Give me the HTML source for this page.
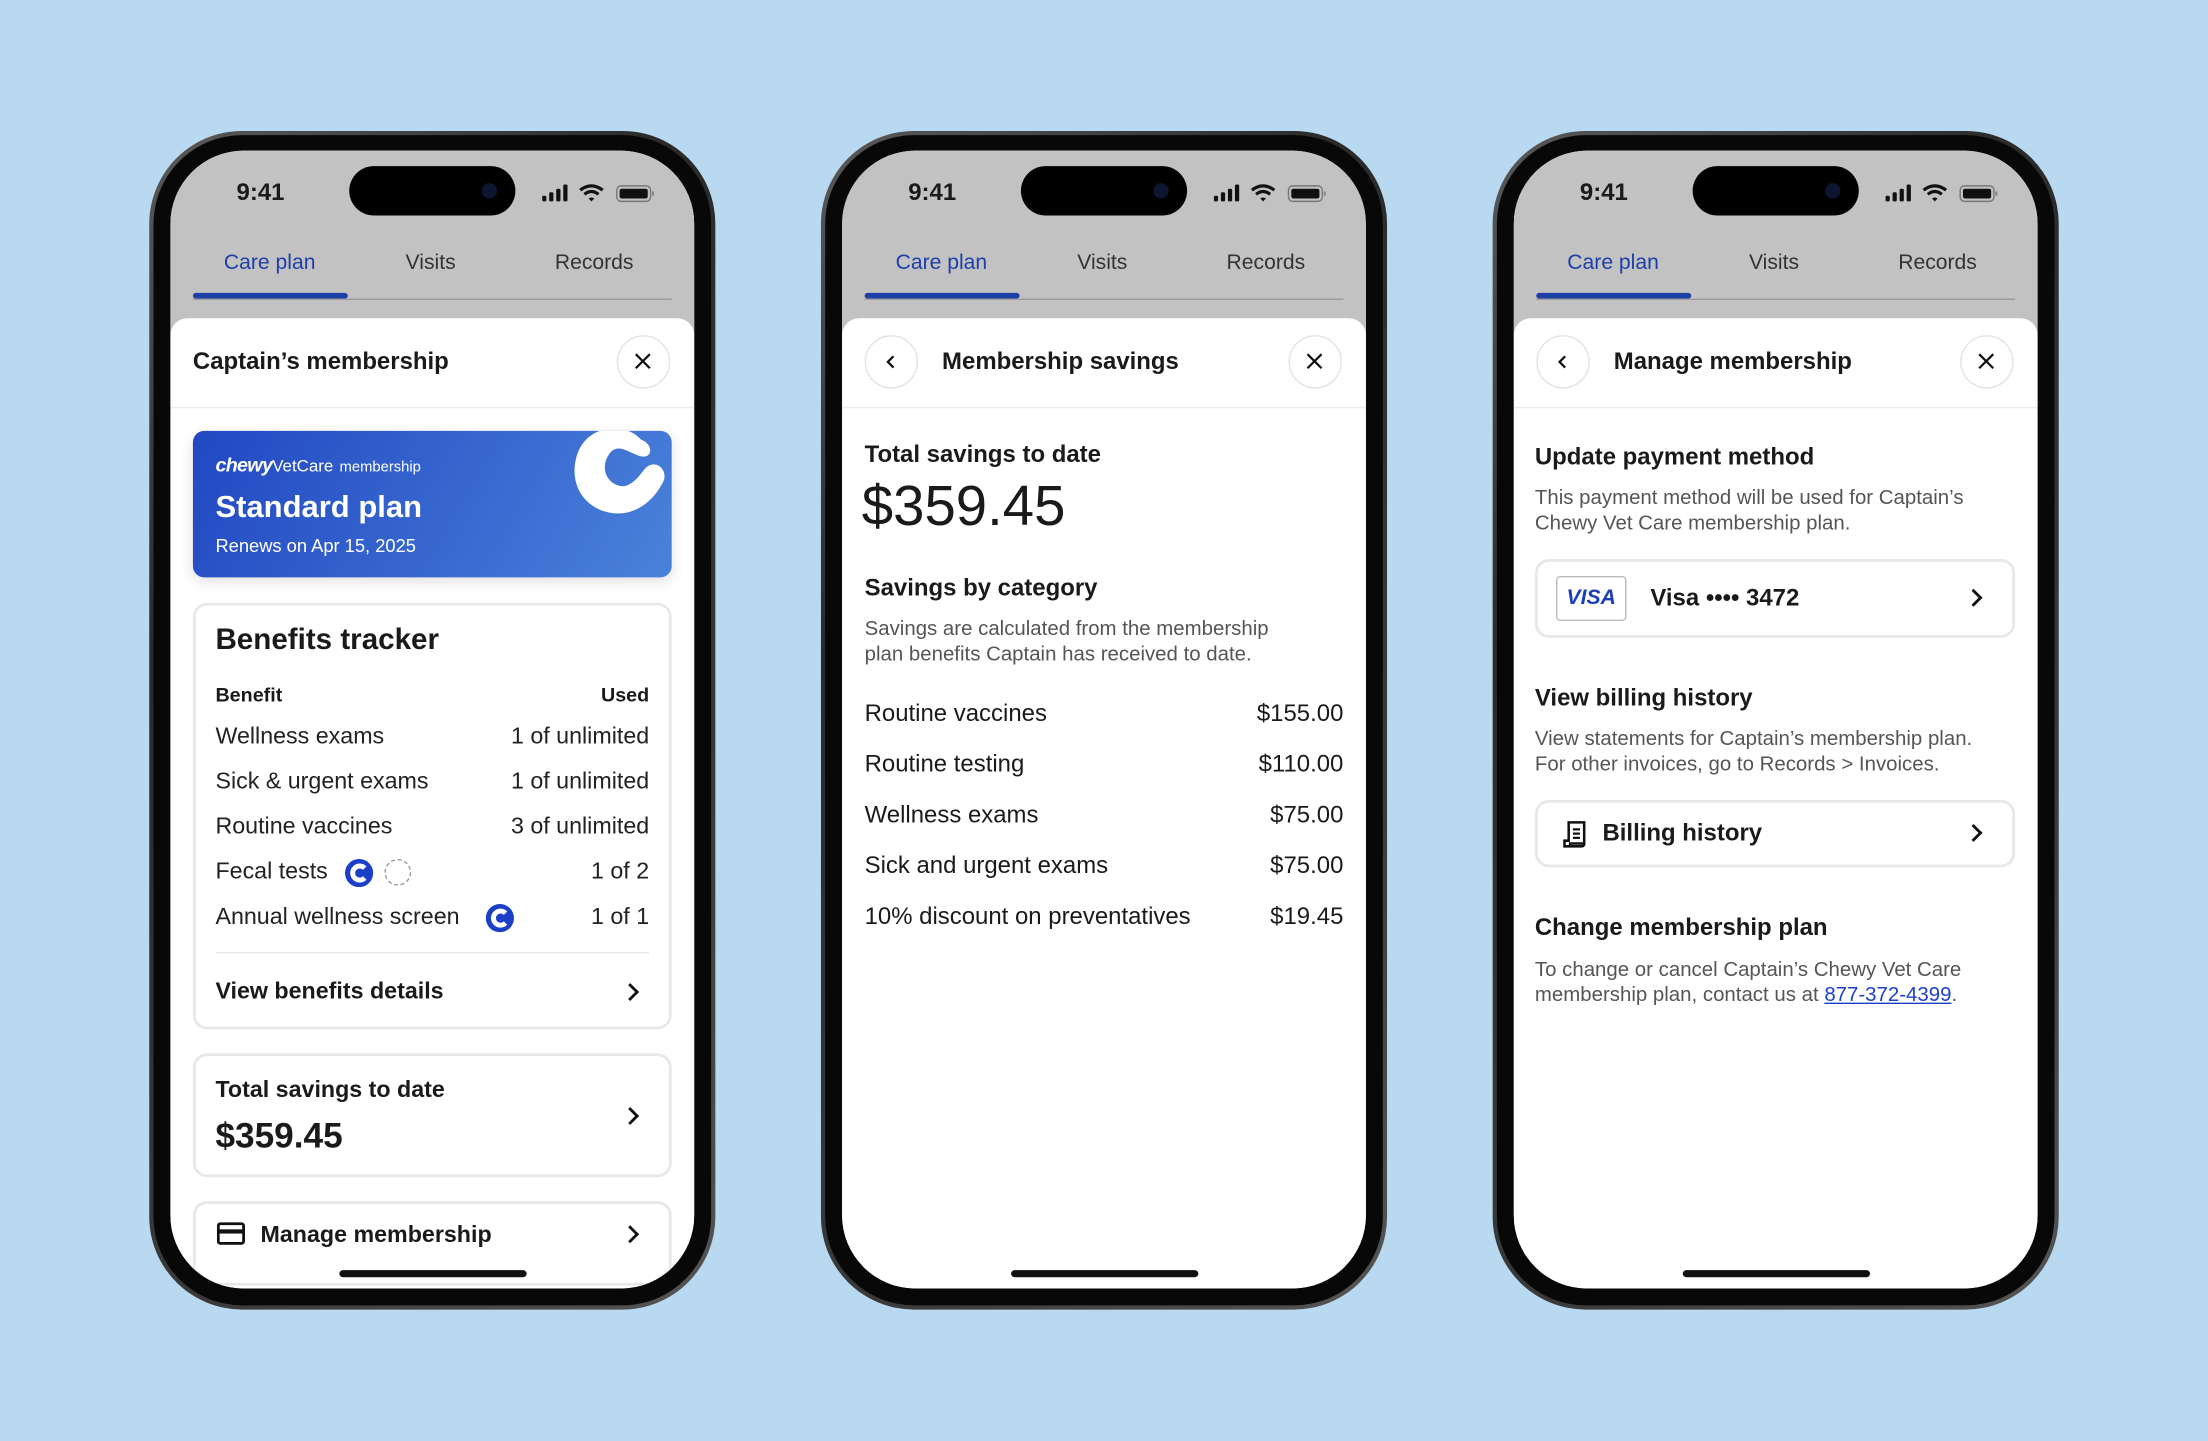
<!DOCTYPE html>
<html><head><meta charset="utf-8">
<style>
*{margin:0;padding:0;box-sizing:border-box}
html,body{width:2208px;height:1440px;overflow:hidden;background:#b9d9f0;font-family:"Liberation Sans",sans-serif;color:#1a1a1a}
#wrap{position:absolute;left:0;top:0;width:1568px;height:1023px;transform:scale(1.408163);transform-origin:0 0}
.phone{position:absolute;top:93px;width:402px;height:837px;border-radius:66px;background:linear-gradient(135deg,#5a5a5a,#2a2a2a 30%,#3a3a3a 70%,#555);}
.bz{position:absolute;left:3px;top:3px;right:3px;bottom:3px;border-radius:63px;background:#080808}
.scr{position:absolute;left:15px;top:14px;width:372px;height:808px;border-radius:52px;background:#fff;overflow:hidden}
.top{position:absolute;left:0;top:0;width:372px;height:132px;background:#c2c2c2}
.sheet{position:absolute;left:0;top:119px;width:372px;height:700px;background:#fff;border-radius:12px 12px 0 0}
.a{position:absolute;white-space:nowrap;line-height:20px}
.time{left:34px;top:20px;font-size:17px;font-weight:bold;width:60px;text-align:center}
.isl{position:absolute;left:127px;top:11px;width:118px;height:35px;border-radius:18px;background:#000}
.cam{position:absolute;left:94px;top:12px;width:11px;height:11px;border-radius:50%;background:#0d1530}
.tab{font-size:15px;top:70px;color:#333}
.ul{position:absolute;left:16px;top:101px;width:110px;height:4px;background:#1c3fa8;border-radius:2px}
.gl{position:absolute;left:16px;top:105px;width:340px;height:1px;background:#9a9a9a}
.hd{font-size:17px;font-weight:bold;top:140px}
.circ{position:absolute;width:38px;height:38px;border-radius:50%;border:1.5px solid #e3e3e3;top:131px}
.div{position:absolute;left:0;top:182px;width:372px;height:1px;background:#ececec}
.card{position:absolute;border:2px solid #e8e8e8;border-radius:10px}
.row{font-size:16.5px;color:#222}
.r{text-align:right}
.home{position:absolute;left:120px;top:795px;width:133px;height:5px;border-radius:3px;background:#111}
.h2{font-size:17px;font-weight:bold}
.desc{font-size:14.5px;color:#555;line-height:18px}
.chev{position:absolute;width:9px;height:9px;border-right:2px solid #111;border-top:2px solid #111;transform:rotate(45deg)}
</style></head><body><div id="wrap">

<!-- PHONE 1 -->
<div class="phone" style="left:106px"><div class="bz"></div>
<div class="scr">
<div class="top"></div>
<div class="a time">9:41</div>
<div class="isl"><div class="cam"></div></div>
<svg class="a" style="left:264px;top:23px" width="82" height="14" viewBox="0 0 82 14">
<rect x="0" y="9" width="3" height="4" rx="1" fill="#111"/><rect x="5" y="6.5" width="3" height="6.5" rx="1" fill="#111"/><rect x="10" y="4" width="3" height="9" rx="1" fill="#111"/><rect x="15" y="1" width="3" height="12" rx="1" fill="#111"/>
<path d="M27 5 Q35 -1 43 5" stroke="#111" stroke-width="2.2" fill="none"/><path d="M30 8 Q35 4 40 8" stroke="#111" stroke-width="2.2" fill="none"/><path d="M33 11 L35 13 L37 11 Q35 9.5 33 11Z" fill="#111"/>
<rect x="53" y="2" width="24" height="11" rx="3" fill="none" stroke="#777" stroke-width="1"/><rect x="55" y="4" width="20" height="7" rx="1.5" fill="#111"/><rect x="78" y="6" width="1.5" height="3" fill="#888"/>
</svg>
<div class="a tab" style="left:38px;color:#1c3fa8">Care plan</div>
<div class="a tab" style="left:167px">Visits</div>
<div class="a tab" style="left:273px">Records</div>
<div class="gl"></div><div class="ul"></div>
<div class="sheet"></div>
<div class="a hd" style="left:16px">Captain’s membership</div>
<div class="circ" style="left:317px"><svg width="35" height="35" viewBox="0 0 35 35"><path d="M12.5 12.5L22.5 22.5M22.5 12.5L12.5 22.5" stroke="#111" stroke-width="1.6"/></svg></div>
<div class="div"></div>
<div style="position:absolute;left:16px;top:199px;width:340px;height:104px;border-radius:8px;background:linear-gradient(120deg,#2148c2,#4a82da);overflow:hidden;box-shadow:0 3px 10px rgba(0,0,0,.12)">
<svg style="position:absolute;left:258px;top:-12px" width="90" height="90" viewBox="0 0 90 90"><path d="M60 18 C50 6 20 6 14 32 C8 58 30 74 50 70 C64 67 72 56 76 48 C80 40 70 30 62 40 C56 48 50 54 42 50 C34 46 32 36 38 28 C44 20 52 28 60 30 C68 32 70 22 60 18Z" fill="#fff"/></svg>
<div class="a" style="left:16px;top:14px;color:#fff"><span style="font-weight:bold;font-style:italic;font-size:14px;letter-spacing:-.5px">chewy</span><span style="font-size:12px">VetCare</span> <span style="font-size:10.5px">membership</span></div>
<div class="a" style="left:16px;top:42px;color:#fff;font-size:22px;font-weight:bold;line-height:24px">Standard plan</div>
<div class="a" style="left:16px;top:72px;color:#fff;font-size:13px">Renews on Apr 15, 2025</div>
</div>
<div class="card" style="left:16px;top:321px;width:340px;height:303px"></div>
<div class="a" style="left:32px;top:336px;font-size:21px;font-weight:bold;line-height:24px">Benefits tracker</div>
<div class="a" style="left:32px;top:376px;font-size:14px;font-weight:bold">Benefit</div>
<div class="a r" style="right:32px;top:376px;font-size:14px;font-weight:bold">Used</div>
<div class="a row" style="left:32px;top:406px">Wellness exams</div><div class="a row r" style="right:32px;top:406px">1 of unlimited</div>
<div class="a row" style="left:32px;top:438px">Sick &amp; urgent exams</div><div class="a row r" style="right:32px;top:438px">1 of unlimited</div>
<div class="a row" style="left:32px;top:470px">Routine vaccines</div><div class="a row r" style="right:32px;top:470px">3 of unlimited</div>
<div class="a row" style="left:32px;top:502px">Fecal tests</div><div class="a row r" style="right:32px;top:502px">1 of 2</div>
<svg class="a" style="left:124px;top:503px" width="20" height="20" viewBox="0 0 20 20"><circle cx="10" cy="10" r="10" fill="#1c3fc8"/><path d="M14 6.5 A5 5 0 1 0 14 13.5" stroke="#fff" stroke-width="3.5" fill="none"/></svg>
<div style="position:absolute;left:152px;top:503px;width:19px;height:19px;border-radius:50%;border:1.2px dashed #999"></div>
<div class="a row" style="left:32px;top:534px">Annual wellness screen</div><div class="a row r" style="right:32px;top:534px">1 of 1</div>
<svg class="a" style="left:224px;top:535px" width="20" height="20" viewBox="0 0 20 20"><circle cx="10" cy="10" r="10" fill="#1c3fc8"/><path d="M14 6.5 A5 5 0 1 0 14 13.5" stroke="#fff" stroke-width="3.5" fill="none"/></svg>
<div style="position:absolute;left:32px;top:569px;width:308px;height:1px;background:#e6e6e6"></div>
<div class="a" style="left:32px;top:587px;font-size:16.5px;font-weight:bold">View benefits details</div>
<div class="chev" style="left:322px;top:593px"></div>
<div class="card" style="left:16px;top:641px;width:340px;height:88px"></div>
<div class="a" style="left:32px;top:657px;font-size:16.5px;font-weight:bold">Total savings to date</div>
<div class="a" style="left:32px;top:686px;font-size:25px;font-weight:bold;line-height:28px">$359.45</div>
<div class="chev" style="left:322px;top:681px"></div>
<div class="card" style="left:16px;top:746px;width:340px;height:60px"></div>
<svg class="a" style="left:33px;top:761px" width="20" height="16" viewBox="0 0 20 16"><rect x="1" y="1" width="18" height="14" rx="1.5" fill="none" stroke="#111" stroke-width="2"/><rect x="1" y="5" width="18" height="3" fill="#111"/></svg>
<div class="a" style="left:64px;top:760px;font-size:16.5px;font-weight:bold">Manage membership</div>
<div class="chev" style="left:322px;top:765px"></div>
<div class="home"></div>
</div></div>

<!-- PHONE 2 -->
<div class="phone" style="left:583px"><div class="bz"></div>
<div class="scr">
<div class="top"></div>
<div class="a time">9:41</div>
<div class="isl"><div class="cam"></div></div>
<svg class="a" style="left:264px;top:23px" width="82" height="14" viewBox="0 0 82 14">
<rect x="0" y="9" width="3" height="4" rx="1" fill="#111"/><rect x="5" y="6.5" width="3" height="6.5" rx="1" fill="#111"/><rect x="10" y="4" width="3" height="9" rx="1" fill="#111"/><rect x="15" y="1" width="3" height="12" rx="1" fill="#111"/>
<path d="M27 5 Q35 -1 43 5" stroke="#111" stroke-width="2.2" fill="none"/><path d="M30 8 Q35 4 40 8" stroke="#111" stroke-width="2.2" fill="none"/><path d="M33 11 L35 13 L37 11 Q35 9.5 33 11Z" fill="#111"/>
<rect x="53" y="2" width="24" height="11" rx="3" fill="none" stroke="#777" stroke-width="1"/><rect x="55" y="4" width="20" height="7" rx="1.5" fill="#111"/><rect x="78" y="6" width="1.5" height="3" fill="#888"/>
</svg>
<div class="a tab" style="left:38px;color:#1c3fa8">Care plan</div>
<div class="a tab" style="left:167px">Visits</div>
<div class="a tab" style="left:273px">Records</div>
<div class="gl"></div><div class="ul"></div>
<div class="sheet"></div>
<div class="circ" style="left:16px"><svg width="35" height="35" viewBox="0 0 35 35"><path d="M19.5 14L15.5 18L19.5 22" stroke="#111" stroke-width="1.6" fill="none"/></svg></div>
<div class="a hd" style="left:71px">Membership savings</div>
<div class="circ" style="left:317px"><svg width="35" height="35" viewBox="0 0 35 35"><path d="M12.5 12.5L22.5 22.5M22.5 12.5L12.5 22.5" stroke="#111" stroke-width="1.6"/></svg></div>
<div class="div"></div>
<div class="a h2" style="left:16px;top:206px">Total savings to date</div>
<div class="a" style="left:14px;top:230px;font-size:40px;line-height:46px">$359.45</div>
<div class="a h2" style="left:16px;top:301px">Savings by category</div>
<div class="a desc" style="left:16px;top:331px">Savings are calculated from the membership<br>plan benefits Captain has received to date.</div>
<div class="a" style="left:16px;top:390px;font-size:17px">Routine vaccines</div><div class="a r" style="right:16px;top:390px;font-size:17px">$155.00</div>
<div class="a" style="left:16px;top:426px;font-size:17px">Routine testing</div><div class="a r" style="right:16px;top:426px;font-size:17px">$110.00</div>
<div class="a" style="left:16px;top:462px;font-size:17px">Wellness exams</div><div class="a r" style="right:16px;top:462px;font-size:17px">$75.00</div>
<div class="a" style="left:16px;top:498px;font-size:17px">Sick and urgent exams</div><div class="a r" style="right:16px;top:498px;font-size:17px">$75.00</div>
<div class="a" style="left:16px;top:534px;font-size:17px">10% discount on preventatives</div><div class="a r" style="right:16px;top:534px;font-size:17px">$19.45</div>
<div class="home"></div>
</div></div>

<!-- PHONE 3 -->
<div class="phone" style="left:1060px"><div class="bz"></div>
<div class="scr">
<div class="top"></div>
<div class="a time">9:41</div>
<div class="isl"><div class="cam"></div></div>
<svg class="a" style="left:264px;top:23px" width="82" height="14" viewBox="0 0 82 14">
<rect x="0" y="9" width="3" height="4" rx="1" fill="#111"/><rect x="5" y="6.5" width="3" height="6.5" rx="1" fill="#111"/><rect x="10" y="4" width="3" height="9" rx="1" fill="#111"/><rect x="15" y="1" width="3" height="12" rx="1" fill="#111"/>
<path d="M27 5 Q35 -1 43 5" stroke="#111" stroke-width="2.2" fill="none"/><path d="M30 8 Q35 4 40 8" stroke="#111" stroke-width="2.2" fill="none"/><path d="M33 11 L35 13 L37 11 Q35 9.5 33 11Z" fill="#111"/>
<rect x="53" y="2" width="24" height="11" rx="3" fill="none" stroke="#777" stroke-width="1"/><rect x="55" y="4" width="20" height="7" rx="1.5" fill="#111"/><rect x="78" y="6" width="1.5" height="3" fill="#888"/>
</svg>
<div class="a tab" style="left:38px;color:#1c3fa8">Care plan</div>
<div class="a tab" style="left:167px">Visits</div>
<div class="a tab" style="left:273px">Records</div>
<div class="gl"></div><div class="ul"></div>
<div class="sheet"></div>
<div class="circ" style="left:16px"><svg width="35" height="35" viewBox="0 0 35 35"><path d="M19.5 14L15.5 18L19.5 22" stroke="#111" stroke-width="1.6" fill="none"/></svg></div>
<div class="a hd" style="left:71px">Manage membership</div>
<div class="circ" style="left:317px"><svg width="35" height="35" viewBox="0 0 35 35"><path d="M12.5 12.5L22.5 22.5M22.5 12.5L12.5 22.5" stroke="#111" stroke-width="1.6"/></svg></div>
<div class="div"></div>
<div class="a h2" style="left:15px;top:208px">Update payment method</div>
<div class="a desc" style="left:15px;top:238px">This payment method will be used for Captain’s<br>Chewy Vet Care membership plan.</div>
<div class="card" style="left:15px;top:290px;width:341px;height:56px"></div>
<div style="position:absolute;left:30px;top:302px;width:50px;height:32px;border:1.2px solid #bbb;border-radius:3px;text-align:center;line-height:30px;color:#1a3fb8;font-weight:bold;font-style:italic;font-size:15px">VISA</div>
<div class="a" style="left:97px;top:308px;font-size:17px;font-weight:bold">Visa •••• 3472</div>
<div class="chev" style="left:322px;top:313px"></div>
<div class="a h2" style="left:15px;top:379px">View billing history</div>
<div class="a desc" style="left:15px;top:409px">View statements for Captain’s membership plan.<br>For other invoices, go to Records &gt; Invoices.</div>
<div class="card" style="left:15px;top:461px;width:341px;height:48px"></div>
<svg class="a" style="left:34px;top:475px" width="20" height="21" viewBox="0 0 20 21"><path d="M5 2 H16 V17 H6 V19 H2 V15 H5 Z M2 19 H14 Q16 19 16 17" fill="none" stroke="#111" stroke-width="1.8"/><path d="M8 7H13M8 10H13M8 13H13" stroke="#111" stroke-width="1.6"/></svg>
<div class="a" style="left:63px;top:475px;font-size:17px;font-weight:bold">Billing history</div>
<div class="chev" style="left:322px;top:480px"></div>
<div class="a h2" style="left:15px;top:542px">Change membership plan</div>
<div class="a desc" style="left:15px;top:573px">To change or cancel Captain’s Chewy Vet Care<br>membership plan, contact us at <span style="color:#1c3fc8;text-decoration:underline">877-372-4399</span>.</div>
<div class="home"></div>
</div></div>

</div></body></html>
